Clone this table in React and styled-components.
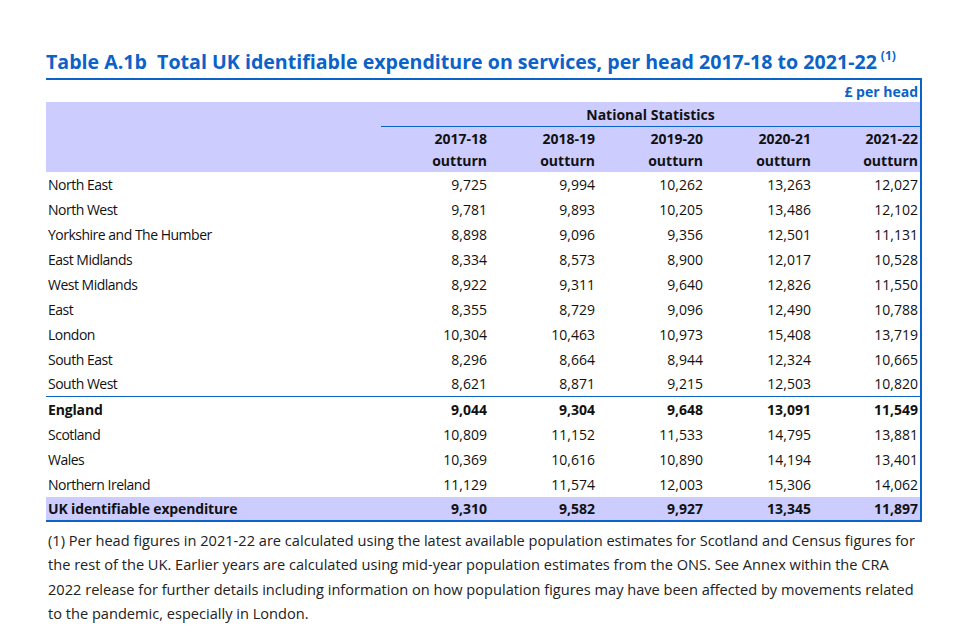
import React from "react";
import styled, { createGlobalStyle } from "styled-components";

const BLUE = "#0b63c9";
const LAVENDER = "#ccccff";

const Global = createGlobalStyle`
  body {
    margin: 0;
    background: #fff;
    font-family: "Open Sans", "Noto Sans", sans-serif;
    color: #111;
  }
`;

const Page = styled.div`
  padding: 48px 0 0 46px;
  width: 876px;
`;

const Title = styled.h1`
  margin: 0;
  font-size: 19.6px;
  line-height: 28px;
  font-weight: 700;
  color: ${BLUE};
  border-bottom: 2px solid ${BLUE};
  padding-bottom: 2px;
  white-space: nowrap;

  & sup {
    font-size: 12px;
    vertical-align: 9px;
    line-height: 0;
    margin-left: 4px;
  }
`;

const Table = styled.table`
  width: 100%;
  border-collapse: collapse;
  border-right: 2px solid ${BLUE};
  border-bottom: 2px solid ${BLUE};
  font-size: 14px;
  table-layout: fixed;
`;

const Row = styled.tr`
  height: ${(p) => p.$h || 25}px;
  background: ${(p) => (p.$shade ? LAVENDER : "transparent")};
  font-weight: ${(p) => (p.$bold ? 700 : 400)};
  border-top: ${(p) => (p.$rule ? `1px solid ${BLUE}` : "none")};
`;

const Label = styled.td`
  padding: 0 0 0 2px;
  text-align: left;
  white-space: nowrap;
  letter-spacing: ${(p) => (p.$bold ? "-0.15px" : "-0.5px")};
`;

const Num = styled.td`
  padding: 0 2px 0 0;
  text-align: right;
  white-space: nowrap;
`;

const Units = styled.td`
  text-align: right;
  color: ${BLUE};
  font-weight: 700;
  padding: 0 2px 0 0;
`;

const Group = styled.td`
  text-align: center;
  font-weight: 700;
  border-bottom: 1px solid ${BLUE};
  padding: 1px 0 0;
`;

const Head = styled.th`
  text-align: right;
  font-weight: 700;
  padding: 1px 2px 0 0;
  line-height: 22px;
  vertical-align: middle;
`;

const Note = styled.p`
  margin: 6px 0 0 2px;
  font-size: 14.6px;
  line-height: 24.5px;
  color: #222;
  white-space: nowrap;
`;

const years = ["2017-18", "2018-19", "2019-20", "2020-21", "2021-22"];

const rows = [
  ["North East", "9,725", "9,994", "10,262", "13,263", "12,027"],
  ["North West", "9,781", "9,893", "10,205", "13,486", "12,102"],
  ["Yorkshire and The Humber", "8,898", "9,096", "9,356", "12,501", "11,131"],
  ["East Midlands", "8,334", "8,573", "8,900", "12,017", "10,528"],
  ["West Midlands", "8,922", "9,311", "9,640", "12,826", "11,550"],
  ["East", "8,355", "8,729", "9,096", "12,490", "10,788"],
  ["London", "10,304", "10,463", "10,973", "15,408", "13,719"],
  ["South East", "8,296", "8,664", "8,944", "12,324", "10,665"],
  ["South West", "8,621", "8,871", "9,215", "12,503", "10,820"],
  ["England", "9,044", "9,304", "9,648", "13,091", "11,549", "bold"],
  ["Scotland", "10,809", "11,152", "11,533", "14,795", "13,881"],
  ["Wales", "10,369", "10,616", "10,890", "14,194", "13,401"],
  ["Northern Ireland", "11,129", "11,574", "12,003", "15,306", "14,062"],
  ["UK identifiable expenditure", "9,310", "9,582", "9,927", "13,345", "11,897", "total"],
];

export default function App() {
  return (
    <Page>
      <Global />
      <Title>
        Table A.1b&nbsp;&nbsp;Total UK identifiable expenditure on services, per head 2017-18 to 2021-22
        <sup>(1)</sup>
      </Title>
      <Table>
        <colgroup>
          <col style={{ width: 335 }} />
          {years.map((y) => (
            <col key={y} />
          ))}
        </colgroup>
        <tbody>
          <Row $h={22}>
            <td />
            <Units colSpan={5}>£ per head</Units>
          </Row>
          <Row $h={24} $shade>
            <td />
            <Group colSpan={5}>National Statistics</Group>
          </Row>
          <Row $h={43} $shade>
            <td />
            {years.map((y) => (
              <Head key={y}>
                {y}
                <br />
                outturn
              </Head>
            ))}
          </Row>
          {rows.map((r) => {
            const bold = r[6] === "bold" || r[6] === "total";
            return (
              <Row
                key={r[0]}
                $bold={bold}
                $shade={r[6] === "total"}
                $rule={r[6] === "bold"}
                $h={r[6] === "total" ? 24 : 25}
              >
                <Label $bold={bold}>{r[0]}</Label>
                {r.slice(1, 6).map((v, i) => (
                  <Num key={i}>{v}</Num>
                ))}
              </Row>
            );
          })}
        </tbody>
      </Table>
      <Note>
        (1) Per head figures in 2021-22 are calculated using the latest available population estimates for Scotland and Census figures for
        <br />
        the rest of the UK. Earlier years are calculated using mid-year population estimates from the ONS. See Annex within the CRA
        <br />
        2022 release for further details including information on how population figures may have been affected by movements related
        <br />
        to the pandemic, especially in London.
      </Note>
    </Page>
  );
}
